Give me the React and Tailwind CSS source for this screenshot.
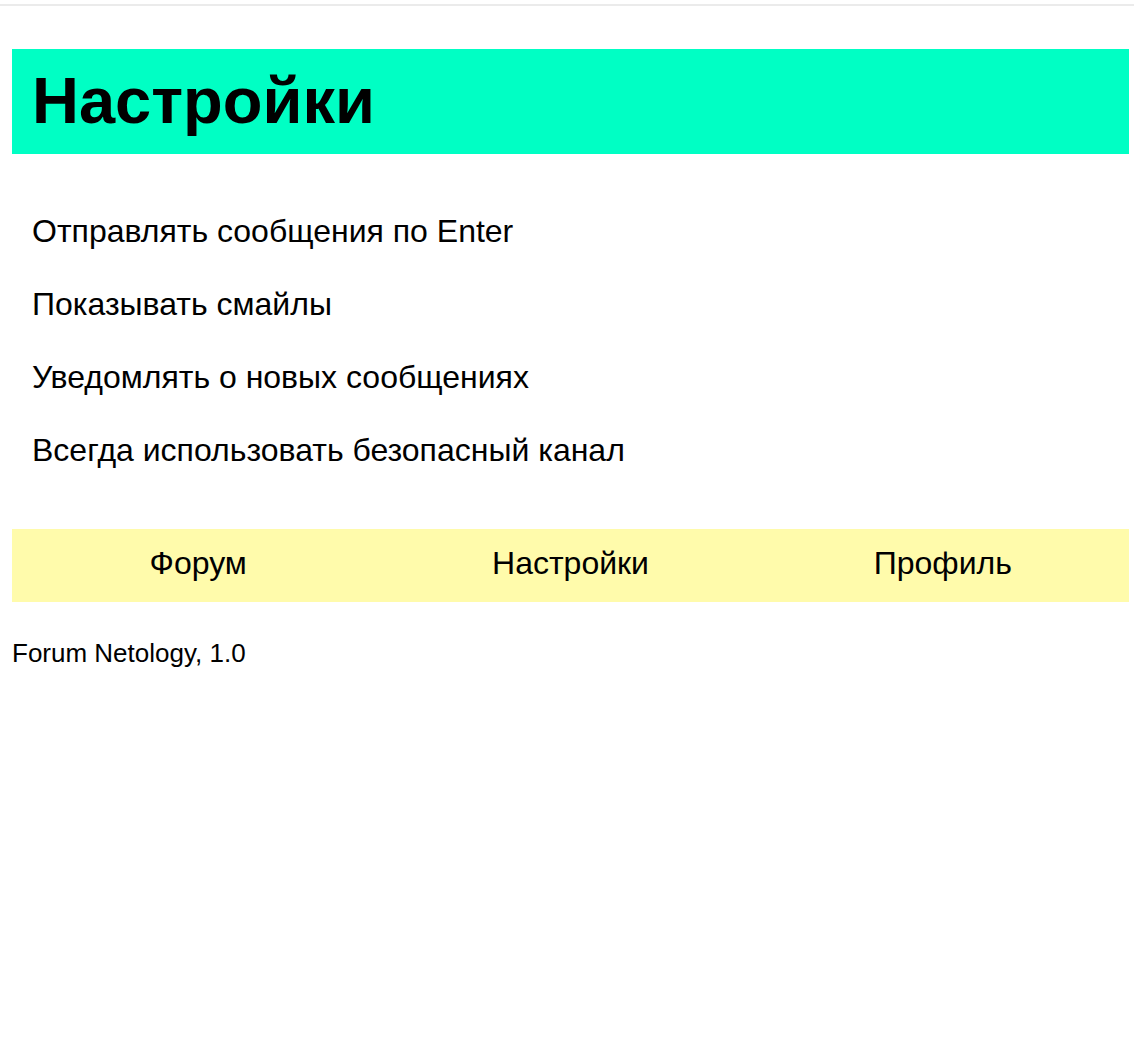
const settings = [
  'Отправлять сообщения по Enter',
  'Показывать смайлы',
  'Уведомлять о новых сообщениях',
  'Всегда использовать безопасный канал',
];

const links = ['Форум', 'Настройки', 'Профиль'];

export default function App() {
  return (
    <div className="min-h-screen bg-white pt-1 font-['Liberation_Sans',Arial,sans-serif] text-[32px] leading-[37px] text-black">
      <div className="border-t-2 border-[#ebebeb] pt-[43px] pr-[5px] pl-3">
        <header className="bg-[#00ffc4] px-5 pt-[15px] pb-4">
          <h1 className="text-[65px] leading-[74px] font-bold">Настройки</h1>
        </header>
        <main className="px-5 pt-[59px] pb-[60px]">
          <ul className="flex flex-col gap-9">
            {settings.map((text) => (
              <li key={text}>{text}</li>
            ))}
          </ul>
        </main>
        <nav className="grid grid-cols-3 bg-[#fffbab] pt-4 pb-5 text-center">
          {links.map((text) => (
            <a key={text} href="#">
              {text}
            </a>
          ))}
        </nav>
        <footer className="pt-9 text-[26px] leading-[30px]">Forum Netology, 1.0</footer>
      </div>
    </div>
  );
}
